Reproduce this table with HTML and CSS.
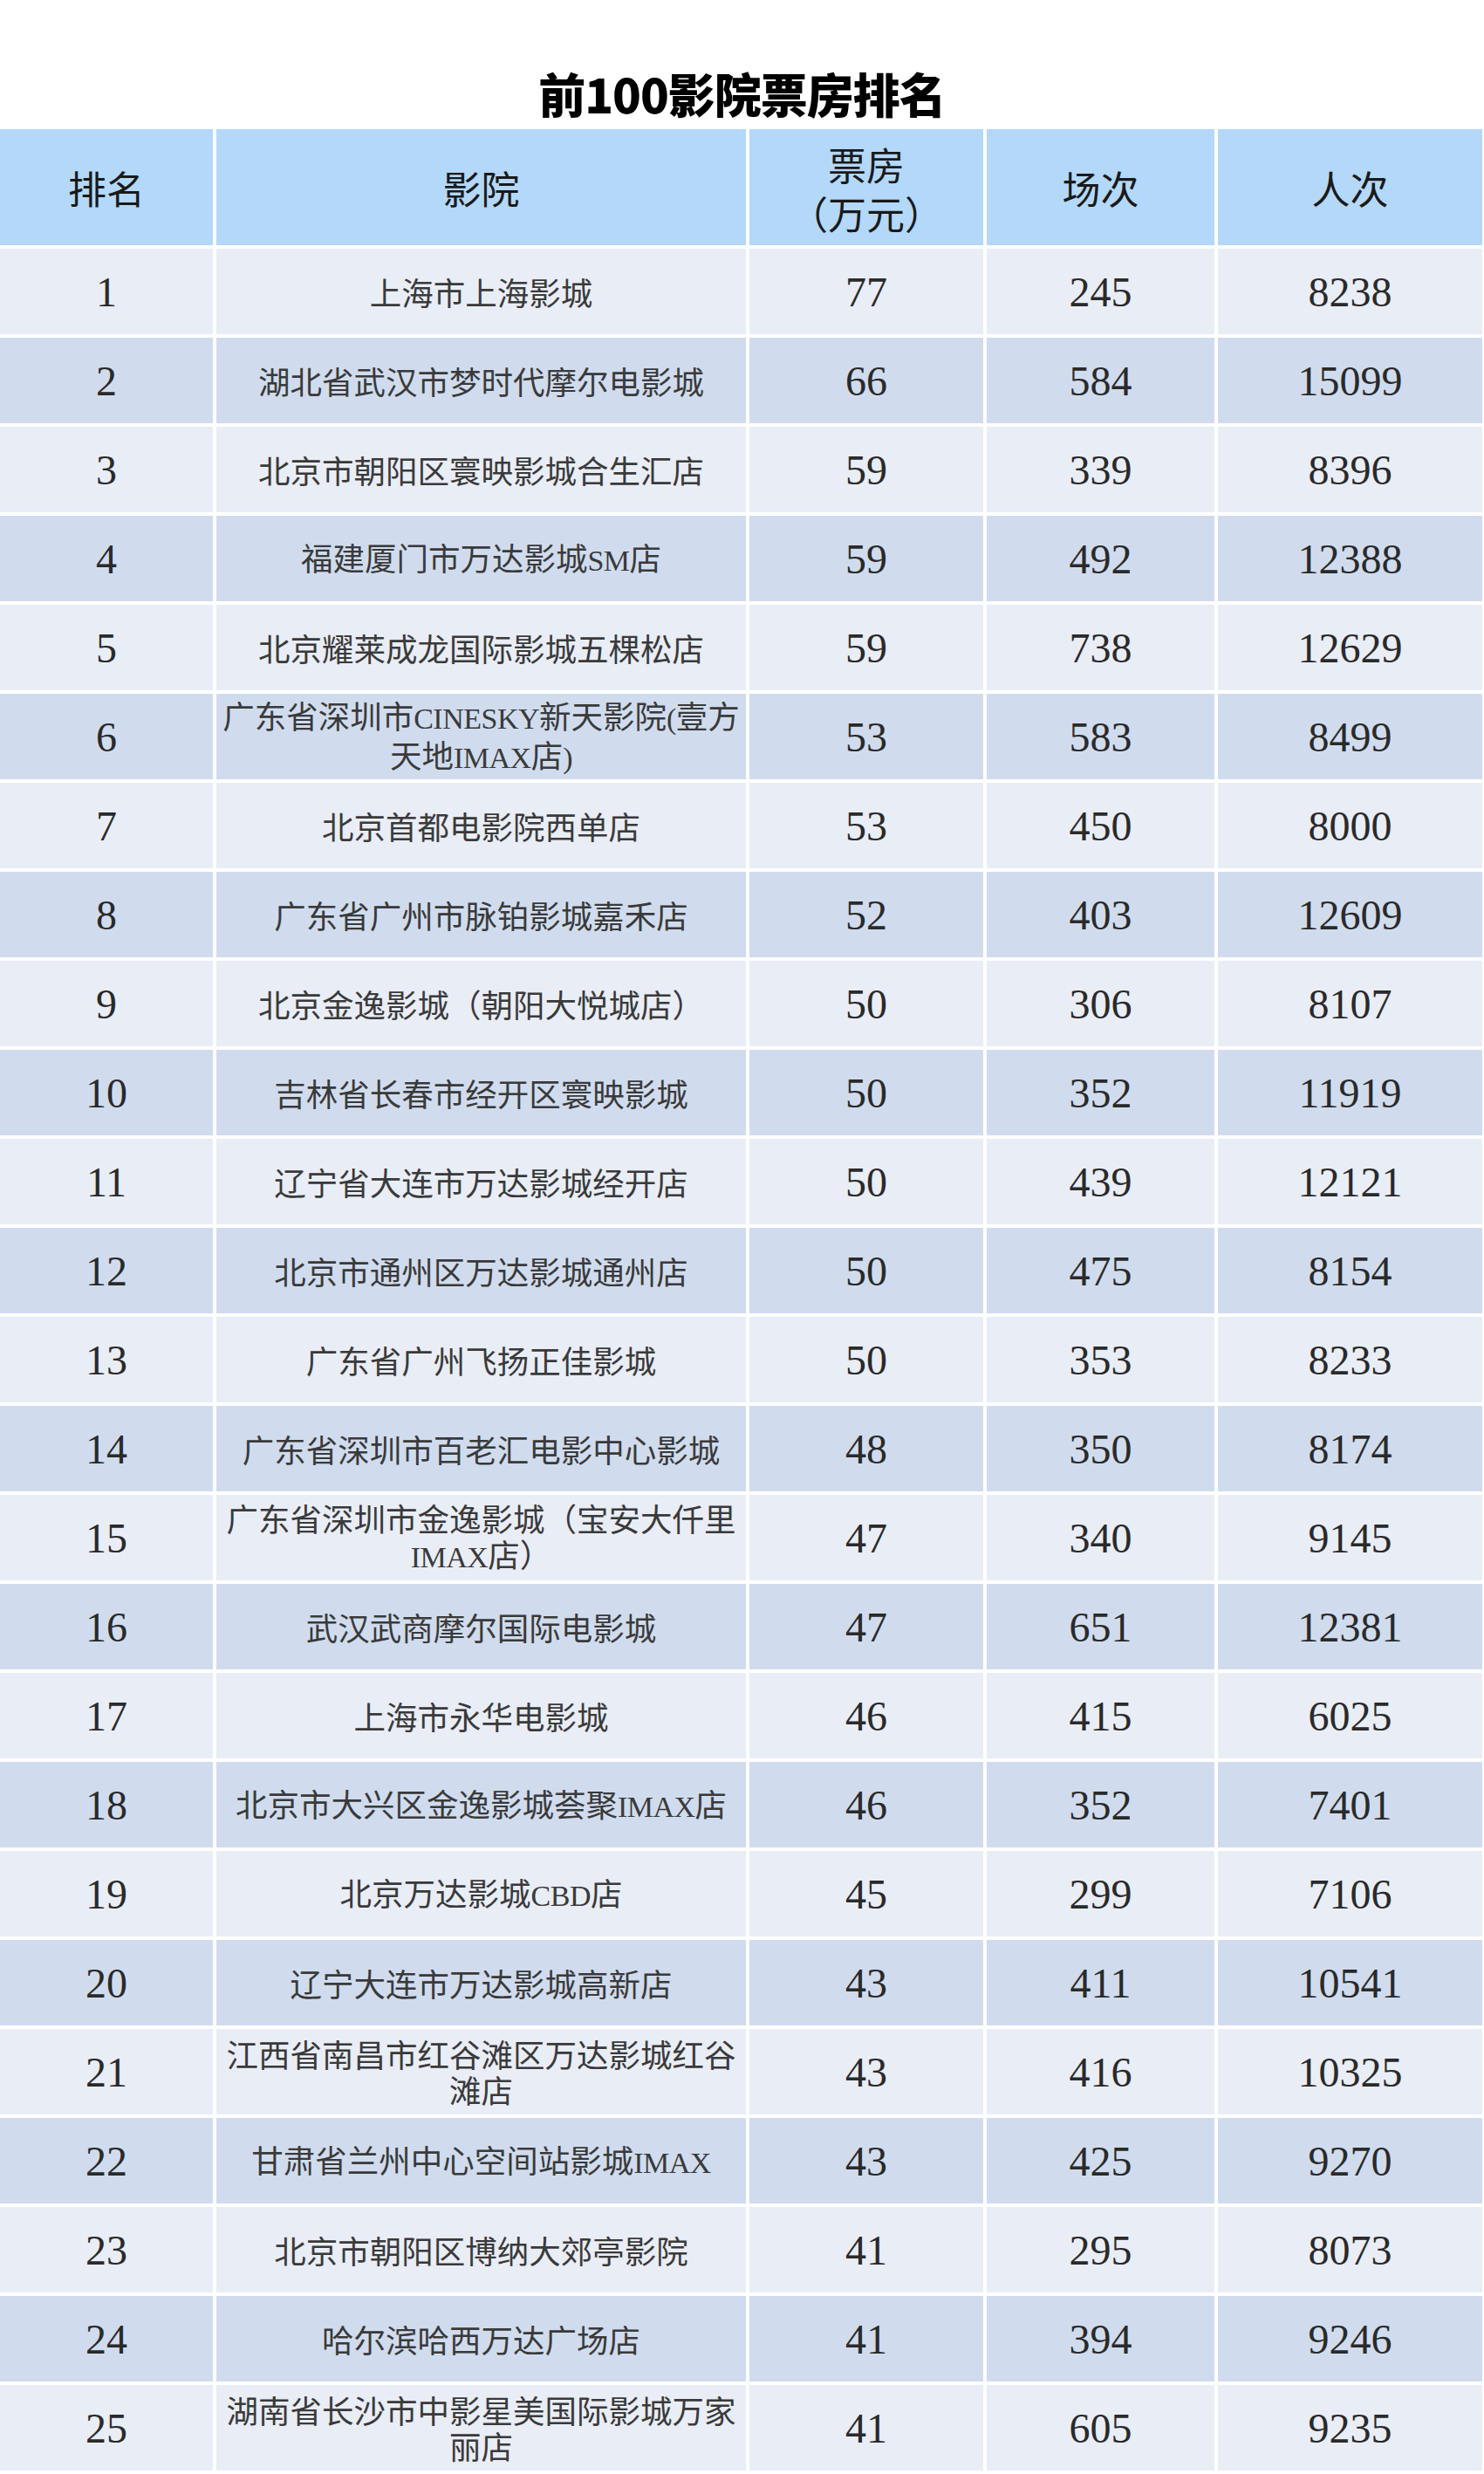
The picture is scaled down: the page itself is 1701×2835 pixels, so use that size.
FILE: index.html
```html
<!DOCTYPE html>
<html lang="zh-CN">
<head>
<meta charset="utf-8">
<title>前100影院票房排名</title>
<link rel="stylesheet" href="styles.css">
</head>
<body>
<div class="page">
  <h1 class="title">前100影院票房排名</h1>
  <div class="table">
    <div class="row head">
      <div class="c"><span class="t">排名</span></div>
      <div class="c"><span class="t">影院</span></div>
      <div class="c"><span class="t two">票房<br>（万元）</span></div>
      <div class="c"><span class="t">场次</span></div>
      <div class="c"><span class="t">人次</span></div>
    </div>
    <div class="row odd"><div class="c n">1</div><div class="c name"><span class="t">上海市上海影城</span></div><div class="c n">77</div><div class="c n">245</div><div class="c n">8238</div></div>
    <div class="row even"><div class="c n">2</div><div class="c name"><span class="t">湖北省武汉市梦时代摩尔电影城</span></div><div class="c n">66</div><div class="c n">584</div><div class="c n">15099</div></div>
    <div class="row odd"><div class="c n">3</div><div class="c name"><span class="t">北京市朝阳区寰映影城合生汇店</span></div><div class="c n">59</div><div class="c n">339</div><div class="c n">8396</div></div>
    <div class="row even"><div class="c n">4</div><div class="c name"><span class="t">福建厦门市万达影城<span class="lat">SM</span>店</span></div><div class="c n">59</div><div class="c n">492</div><div class="c n">12388</div></div>
    <div class="row odd"><div class="c n">5</div><div class="c name"><span class="t">北京耀莱成龙国际影城五棵松店</span></div><div class="c n">59</div><div class="c n">738</div><div class="c n">12629</div></div>
    <div class="row even"><div class="c n">6</div><div class="c name"><span class="t">广东省深圳市<span class="lat">CINESKY</span>新天影院<span class="lat">(</span>壹方<br>天地<span class="lat">IMAX</span>店<span class="lat">)</span></span></div><div class="c n">53</div><div class="c n">583</div><div class="c n">8499</div></div>
    <div class="row odd"><div class="c n">7</div><div class="c name"><span class="t">北京首都电影院西单店</span></div><div class="c n">53</div><div class="c n">450</div><div class="c n">8000</div></div>
    <div class="row even"><div class="c n">8</div><div class="c name"><span class="t">广东省广州市脉铂影城嘉禾店</span></div><div class="c n">52</div><div class="c n">403</div><div class="c n">12609</div></div>
    <div class="row odd"><div class="c n">9</div><div class="c name"><span class="t">北京金逸影城（朝阳大悦城店）</span></div><div class="c n">50</div><div class="c n">306</div><div class="c n">8107</div></div>
    <div class="row even"><div class="c n">10</div><div class="c name"><span class="t">吉林省长春市经开区寰映影城</span></div><div class="c n">50</div><div class="c n">352</div><div class="c n">11919</div></div>
    <div class="row odd"><div class="c n">11</div><div class="c name"><span class="t">辽宁省大连市万达影城经开店</span></div><div class="c n">50</div><div class="c n">439</div><div class="c n">12121</div></div>
    <div class="row even"><div class="c n">12</div><div class="c name"><span class="t">北京市通州区万达影城通州店</span></div><div class="c n">50</div><div class="c n">475</div><div class="c n">8154</div></div>
    <div class="row odd"><div class="c n">13</div><div class="c name"><span class="t">广东省广州飞扬正佳影城</span></div><div class="c n">50</div><div class="c n">353</div><div class="c n">8233</div></div>
    <div class="row even"><div class="c n">14</div><div class="c name"><span class="t">广东省深圳市百老汇电影中心影城</span></div><div class="c n">48</div><div class="c n">350</div><div class="c n">8174</div></div>
    <div class="row odd"><div class="c n">15</div><div class="c name"><span class="t">广东省深圳市金逸影城（宝安大仟里<br><span class="lat">IMAX</span>店）</span></div><div class="c n">47</div><div class="c n">340</div><div class="c n">9145</div></div>
    <div class="row even"><div class="c n">16</div><div class="c name"><span class="t">武汉武商摩尔国际电影城</span></div><div class="c n">47</div><div class="c n">651</div><div class="c n">12381</div></div>
    <div class="row odd"><div class="c n">17</div><div class="c name"><span class="t">上海市永华电影城</span></div><div class="c n">46</div><div class="c n">415</div><div class="c n">6025</div></div>
    <div class="row even"><div class="c n">18</div><div class="c name"><span class="t">北京市大兴区金逸影城荟聚<span class="lat">IMAX</span>店</span></div><div class="c n">46</div><div class="c n">352</div><div class="c n">7401</div></div>
    <div class="row odd"><div class="c n">19</div><div class="c name"><span class="t">北京万达影城<span class="lat">CBD</span>店</span></div><div class="c n">45</div><div class="c n">299</div><div class="c n">7106</div></div>
    <div class="row even"><div class="c n">20</div><div class="c name"><span class="t">辽宁大连市万达影城高新店</span></div><div class="c n">43</div><div class="c n">411</div><div class="c n">10541</div></div>
    <div class="row odd"><div class="c n">21</div><div class="c name"><span class="t">江西省南昌市红谷滩区万达影城红谷<br>滩店</span></div><div class="c n">43</div><div class="c n">416</div><div class="c n">10325</div></div>
    <div class="row even"><div class="c n">22</div><div class="c name"><span class="t">甘肃省兰州中心空间站影城<span class="lat">IMAX</span></span></div><div class="c n">43</div><div class="c n">425</div><div class="c n">9270</div></div>
    <div class="row odd"><div class="c n">23</div><div class="c name"><span class="t">北京市朝阳区博纳大郊亭影院</span></div><div class="c n">41</div><div class="c n">295</div><div class="c n">8073</div></div>
    <div class="row even"><div class="c n">24</div><div class="c name"><span class="t">哈尔滨哈西万达广场店</span></div><div class="c n">41</div><div class="c n">394</div><div class="c n">9246</div></div>
    <div class="row odd"><div class="c n">25</div><div class="c name"><span class="t">湖南省长沙市中影星美国际影城万家<br>丽店</span></div><div class="c n">41</div><div class="c n">605</div><div class="c n">9235</div></div>
  </div>
</div>
</body>
</html>
```

FILE: styles.css
```css
html, body {
  margin: 0;
  padding: 0;
  background: #ffffff;
}

.page {
  width: 1701px;
  font-family: "Noto Sans CJK SC", "Noto Sans", sans-serif;
}

.title {
  margin: 0;
  padding: 80px 0 14px;
  height: 54px;
  line-height: 54px;
  font-size: 54px;
  font-weight: 900;
  color: #000000;
  text-align: center;
  letter-spacing: -1px;
}

.table {
  display: grid;
  grid-template-columns: 244px 607px 268px 261px 303px;
  grid-template-rows: 133px;
  grid-auto-rows: 98px;
  column-gap: 4px;
  row-gap: 4px;
  width: 1699px;
}

.row {
  display: contents;
}

.c {
  display: flex;
  align-items: center;
  justify-content: center;
  text-align: center;
  color: #333333;
  white-space: nowrap;
}

.t {
  display: block;
  text-align: center;
}

.head .c {
  background: #b3d8fa;
  font-size: 44px;
  line-height: 56px;
  color: #1a1a1a;
}

.head .two {
  padding-top: 2px;
}

.odd .c {
  background: #e9edf6;
}

.even .c {
  background: #d0dcee;
}

.n {
  font-family: "Liberation Serif", serif;
  font-size: 48px;
  color: #2a2a2a;
}

.name {
  font-size: 36.5px;
  line-height: 41px;
  color: #3a3a3a;
}

.lat {
  font-family: "Liberation Serif", serif;
  font-size: 34px;
  letter-spacing: -0.5px;
}
```
